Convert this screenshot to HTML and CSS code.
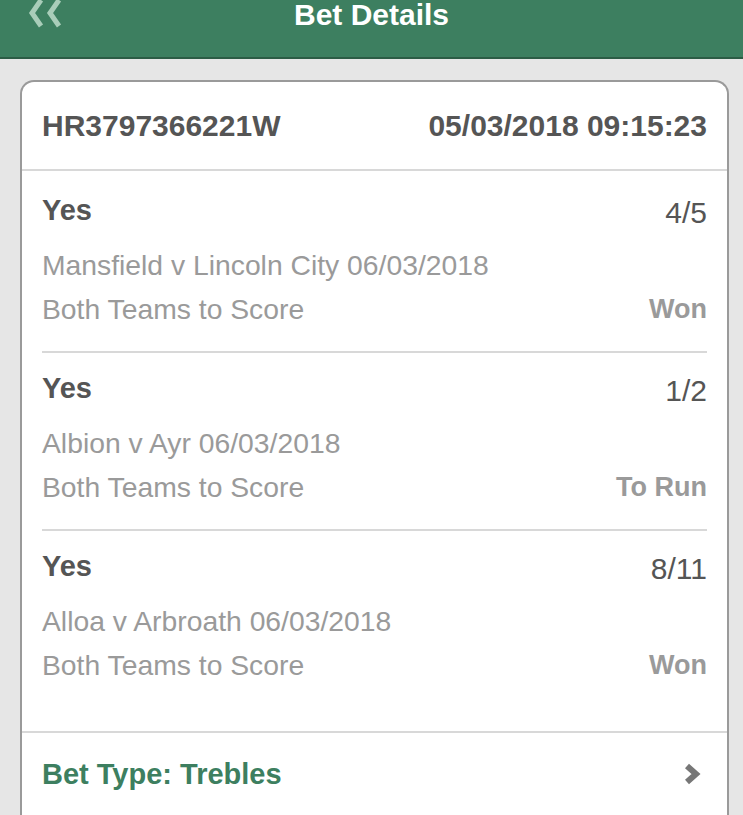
FILE: index.html
```html
<!DOCTYPE html>
<html lang="en">
<head>
    <meta charset="UTF-8">
    <meta name="viewport" content="width=device-width, initial-scale=1.0">
    <title>Bet Details</title>
    <link rel="stylesheet" href="styles.css">
</head>
<body>

    <header class="top-bar">
        <a class="back" href="#" aria-label="Back">
            <svg width="40" height="30" viewBox="0 0 40 30">
                <path d="M16 2 L7 15 L16 28" fill="none" stroke="#a9cdb9" stroke-width="5"/>
                <path d="M34 2 L25 15 L34 28" fill="none" stroke="#a9cdb9" stroke-width="5"/>
            </svg>
        </a>
        <h1>Bet Details</h1>
    </header>

    <div class="page">
        <div class="card">
            <div class="card-head">
                <span>HR3797366221W</span>
                <span>05/03/2018 09:15:23</span>
            </div>

            <div class="selections">
                <div class="selection">
                    <div class="line">
                        <span class="pick">Yes</span>
                        <span class="odds">4/5</span>
                    </div>
                    <div class="event">Mansfield v Lincoln City 06/03/2018</div>
                    <div class="line market">
                        <span>Both Teams to Score</span>
                        <span class="status">Won</span>
                    </div>
                </div>

                <div class="selection">
                    <div class="line">
                        <span class="pick">Yes</span>
                        <span class="odds">1/2</span>
                    </div>
                    <div class="event">Albion v Ayr 06/03/2018</div>
                    <div class="line market">
                        <span>Both Teams to Score</span>
                        <span class="status">To Run</span>
                    </div>
                </div>

                <div class="selection">
                    <div class="line">
                        <span class="pick">Yes</span>
                        <span class="odds">8/11</span>
                    </div>
                    <div class="event">Alloa v Arbroath 06/03/2018</div>
                    <div class="line market">
                        <span>Both Teams to Score</span>
                        <span class="status">Won</span>
                    </div>
                </div>
            </div>

            <a class="bet-type" href="#">
                <span>Bet Type: Trebles</span>
                <svg width="18" height="24" viewBox="0 0 18 24">
                    <path d="M4 4 L13 12 L4 20" fill="none" stroke="#777" stroke-width="6"/>
                </svg>
            </a>
        </div>
    </div>

</body>
</html>
```

FILE: styles.css
```css
:root {
    --green: #3d7f60;
    --green-dark: #2c5c45;
    --text: #555555;
    --text-light: #9a9a9a;
    --line: #d8d8d8;
    --page-bg: #e6e6e6;
}

* {
    box-sizing: border-box;
    margin: 0;
    padding: 0;
}

body {
    font-family: "Liberation Sans", Arial, Helvetica, sans-serif;
    background-color: var(--page-bg);
    color: var(--text);
    overflow: hidden;
}

.top-bar {
    position: relative;
    height: 59px;
    background-color: var(--green);
    border-bottom: 2px solid var(--green-dark);
    text-align: center;
}

.top-bar h1 {
    color: #ffffff;
    font-size: 30px;
    font-weight: 700;
    line-height: 30px;
}

.back {
    position: absolute;
    left: 25px;
    top: -2px;
}

.page {
    padding: 21px 14px 0 20px;
}

.card {
    background: #ffffff;
    border: 2px solid #9a9a9a;
    border-bottom: none;
    border-radius: 14px 14px 0 0;
    height: 760px;
}

.card-head {
    display: flex;
    justify-content: space-between;
    align-items: center;
    height: 89px;
    padding: 0 20px;
    border-bottom: 2px solid var(--line);
    font-size: 30px;
    font-weight: 700;
}

.selections {
    padding: 4px 20px 24px;
    border-bottom: 2px solid var(--line);
}

.selection {
    padding: 17px 0 20px;
    border-bottom: 2px solid var(--line);
}

.selection:last-child {
    border-bottom: none;
}

.line {
    display: flex;
    justify-content: space-between;
    align-items: flex-start;
}

.pick {
    font-size: 29px;
    font-weight: 700;
    line-height: 36px;
}

.odds {
    font-size: 30px;
    line-height: 30px;
    margin-top: 6px;
}

.event,
.market {
    font-size: 28.3px;
    line-height: 44px;
    color: var(--text-light);
}

.market {
    align-items: center;
}

.event {
    margin-top: 15px;
}

.status {
    font-weight: 700;
    font-size: 27px;
}

.bet-type {
    display: flex;
    justify-content: space-between;
    align-items: center;
    height: 82px;
    padding: 0 26px 0 20px;
    color: var(--green);
    text-decoration: none;
    font-size: 29px;
    font-weight: 700;
}
```
